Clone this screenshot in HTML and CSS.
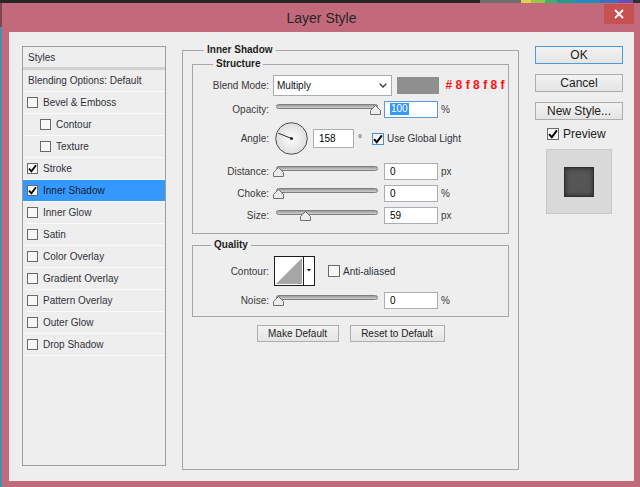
FILE: index.html
```html
<!DOCTYPE html>
<html lang="en">
<head>
<meta charset="utf-8">
<title>Layer Style</title>
<link rel="stylesheet" href="styles.css">
</head>
<body>
<div class="screen">
  <div class="taskstrip">
    <span class="seg dark"></span>
    <span class="seg icons"></span>
    <span class="seg c1"></span>
    <span class="seg c2"></span>
    <span class="seg c3"></span>
    <span class="seg c4"></span>
    <span class="seg c5"></span>
    <span class="seg c6"></span>
    <span class="seg c7"></span>
    <span class="seg c8"></span>
  </div>
  <div class="window">
    <div class="titlebar">
      <span class="title">Layer Style</span>
      <span class="close"><svg width="10" height="10" viewBox="0 0 10 10"><path d="M1 1 L9 9 M9 1 L1 9" stroke="#fff" stroke-width="1.8" fill="none"/></svg></span>
    </div>
    <div class="client">
      <aside class="style-list">
        <div class="list-head">Styles</div>
        <div class="list-item plain">Blending Options: Default</div>
        <div class="list-item"><span class="cb"></span>Bevel &amp; Emboss</div>
        <div class="list-item indent"><span class="cb"></span>Contour</div>
        <div class="list-item indent"><span class="cb"></span>Texture</div>
        <div class="list-item"><span class="cb"><svg class="tick" width="9" height="9" viewBox="0 0 9 9"><path d="M1 4.6 L3.4 7.4 L8 1.2" stroke="#000" stroke-width="1.8" fill="none"/></svg></span>Stroke</div>
        <div class="list-item selected"><span class="cb"><svg class="tick" width="9" height="9" viewBox="0 0 9 9"><path d="M1 4.6 L3.4 7.4 L8 1.2" stroke="#000" stroke-width="1.8" fill="none"/></svg></span>Inner Shadow</div>
        <div class="list-item"><span class="cb"></span>Inner Glow</div>
        <div class="list-item"><span class="cb"></span>Satin</div>
        <div class="list-item"><span class="cb"></span>Color Overlay</div>
        <div class="list-item"><span class="cb"></span>Gradient Overlay</div>
        <div class="list-item"><span class="cb"></span>Pattern Overlay</div>
        <div class="list-item"><span class="cb"></span>Outer Glow</div>
        <div class="list-item"><span class="cb"></span>Drop Shadow</div>
      </aside>

      <main class="settings">
        <fieldset class="group main-group">
          <legend>Inner Shadow</legend>

          <fieldset class="group structure">
            <legend>Structure</legend>
            <div class="row r-blend">
              <span class="lbl">Blend Mode:</span>
              <div class="select"><span>Multiply</span><svg class="chev" width="8" height="5" viewBox="0 0 8 5"><path d="M0.6 0.6 L4 4 L7.4 0.6" stroke="#333" stroke-width="1.3" fill="none"/></svg></div>
              <span class="swatch"></span>
              <span class="hex">#8f8f8f</span>
            </div>
            <div class="row r-opacity">
              <span class="lbl">Opacity:</span>
              <div class="slider"><span class="track"></span><svg class="thumb" style="left:97px" width="11" height="10" viewBox="0 0 11 10"><path d="M0.5 9.5 L0.5 5.5 L5.5 0.5 L10.5 5.5 L10.5 9.5 Z" fill="#ececec" stroke="#707070"/></svg></div>
              <span class="field focus"><span class="sel">100</span></span>
              <span class="unit">%</span>
            </div>
            <div class="row r-angle">
              <span class="lbl">Angle:</span>
              <svg class="dial" width="33" height="33" viewBox="0 0 33 33"><defs><radialGradient id="dg" cx="50%" cy="50%" r="50%"><stop offset="0" stop-color="#fdfdfd"/><stop offset="1" stop-color="#dedede"/></radialGradient></defs><circle cx="16.5" cy="16.5" r="15.8" fill="url(#dg)" stroke="#4d4d4d"/><line x1="16.5" y1="16.5" x2="3.4" y2="11.2" stroke="#2a2a2a" stroke-width="1"/><circle cx="16.5" cy="16.5" r="1.6" fill="#2a2a2a"/></svg>
              <span class="field angle">158</span>
              <span class="deg">°</span>
              <span class="cb lg focus"><svg class="tick" width="10" height="10" viewBox="0 0 9 9"><path d="M1 4.6 L3.4 7.4 L8 1.2" stroke="#000" stroke-width="1.8" fill="none"/></svg></span>
              <span class="cb-text">Use Global Light</span>
            </div>
            <div class="row r-distance">
              <span class="lbl">Distance:</span>
              <div class="slider"><span class="track"></span><svg class="thumb" style="left:0px" width="11" height="10" viewBox="0 0 11 10"><path d="M0.5 9.5 L0.5 5.5 L5.5 0.5 L10.5 5.5 L10.5 9.5 Z" fill="#ececec" stroke="#707070"/></svg></div>
              <span class="field">0</span>
              <span class="unit">px</span>
            </div>
            <div class="row">
              <span class="lbl">Choke:</span>
              <div class="slider"><span class="track"></span><svg class="thumb" style="left:0px" width="11" height="10" viewBox="0 0 11 10"><path d="M0.5 9.5 L0.5 5.5 L5.5 0.5 L10.5 5.5 L10.5 9.5 Z" fill="#ececec" stroke="#707070"/></svg></div>
              <span class="field">0</span>
              <span class="unit">%</span>
            </div>
            <div class="row">
              <span class="lbl">Size:</span>
              <div class="slider"><span class="track"></span><svg class="thumb" style="left:27px" width="11" height="10" viewBox="0 0 11 10"><path d="M0.5 9.5 L0.5 5.5 L5.5 0.5 L10.5 5.5 L10.5 9.5 Z" fill="#ececec" stroke="#707070"/></svg></div>
              <span class="field">59</span>
              <span class="unit">px</span>
            </div>
          </fieldset>

          <fieldset class="group quality">
            <legend>Quality</legend>
            <div class="row r-contour">
              <span class="lbl">Contour:</span>
              <svg class="contour" width="41" height="30" viewBox="0 0 41 30"><rect x="0.5" y="0.5" width="40" height="29" fill="#fff" stroke="#1c1c1c"/><polygon points="2,28 28,2 28,28" fill="#a6a6a6"/><line x1="29.5" y1="1" x2="29.5" y2="29" stroke="#1c1c1c"/><polygon points="33,13 37,13 35,15.5" fill="#111"/></svg>
              <span class="cb lg aa"></span>
              <span class="cb-text">Anti-aliased</span>
            </div>
            <div class="row r-noise">
              <span class="lbl">Noise:</span>
              <div class="slider"><span class="track"></span><svg class="thumb" style="left:0px" width="11" height="10" viewBox="0 0 11 10"><path d="M0.5 9.5 L0.5 5.5 L5.5 0.5 L10.5 5.5 L10.5 9.5 Z" fill="#ececec" stroke="#707070"/></svg></div>
              <span class="field">0</span>
              <span class="unit">%</span>
            </div>
          </fieldset>

          <div class="defaults">
            <button class="btn small make">Make Default</button>
            <button class="btn small reset">Reset to Default</button>
          </div>
        </fieldset>
      </main>

      <div class="actions">
        <button class="btn default">OK</button>
        <button class="btn">Cancel</button>
        <button class="btn">New Style...</button>
        <div class="preview-toggle"><span class="cb lg"><svg class="tick" width="10" height="10" viewBox="0 0 9 9"><path d="M1 4.6 L3.4 7.4 L8 1.2" stroke="#000" stroke-width="1.8" fill="none"/></svg></span><span>Preview</span></div>
        <div class="preview-box"><span class="preview-swatch"></span></div>
      </div>
    </div>
  </div>
</div>
</body>
</html>
```

FILE: styles.css
```css
* { box-sizing: border-box; }
html, body { margin: 0; padding: 0; }
body {
  width: 640px;
  height: 487px;
  overflow: hidden;
  font-family: "Liberation Sans", Arial, sans-serif;
  font-size: 10px;
  color: #333;
}

.screen {
  width: 640px;
  height: 487px;
  display: flex;
  flex-direction: column;
  background: linear-gradient(#7a4654 0 27px, #4b8fae 27px);
}

.taskstrip {
  height: 3px;
  display: flex;
  flex: none;
  background: #262626;
}
.seg { height: 3px; display: block; }
.seg.dark { flex: 1; }
.seg.icons { width: 41px; background: #6d6d6d; }
.seg.c1 { width: 10px; background: #e3cf4a; }
.seg.c2 { width: 14px; background: #9cc54b; }
.seg.c3 { width: 12px; background: #3db06b; }
.seg.c4 { width: 17px; background: #1f9b8f; }
.seg.c5 { width: 26px; background: #1d8fb8; }
.seg.c6 { width: 18px; background: #3b6fc0; }
.seg.c7 { width: 15px; background: #6a50b0; }
.seg.c8 { width: 7px; background: #303030; }

.window {
  flex: 1;
  margin-left: 2px;
  background: #c26a7b;
  display: flex;
  flex-direction: column;
  padding: 0 6px 6px 7px;
}

.titlebar {
  height: 29px;
  flex: none;
  display: grid;
  grid-template-columns: 1fr auto 1fr;
  align-items: center;
}
.title {
  grid-column: 2;
  font-size: 14px;
  color: #262626;
}
.close {
  grid-column: 3;
  justify-self: end;
  align-self: start;
  margin-top: 1px;
  width: 30px;
  height: 20px;
  background: #c75050;
  display: flex;
  align-items: center;
  justify-content: center;
}

.client {
  flex: 1;
  background: #eeeeee;
  display: flex;
  align-items: flex-start;
  padding: 14px 0 0 13px;
}

/* ---------- left list ---------- */
.style-list {
  flex: none;
  width: 144px;
  height: 420px;
  border: 1px solid #9d9d9d;
  color: #30323a;
}
.list-head {
  height: 23px;
  padding-left: 5px;
  display: flex;
  align-items: center;
  border-bottom: 3px solid #d1d1d1;
}
.list-item {
  height: 22px;
  display: flex;
  align-items: center;
  padding-left: 4px;
  border-bottom: 1px solid #fbfbfb;
  white-space: nowrap;
}
.list-item.plain { padding-left: 5px; }
.list-item.indent { padding-left: 17px; }
.list-item .cb { margin-right: 5px; }
.list-item.selected { background: #3399ff; color: #1a1a2a; }

.cb {
  flex: none;
  width: 11px;
  height: 11px;
  border: 1px solid #6a6a6a;
  background: #f7f7f7;
  display: inline-flex;
  align-items: center;
  justify-content: center;
}
.cb.lg { width: 12px; height: 12px; }
.cb.focus { border-color: #4a90d9; }

/* ---------- settings ---------- */
.settings {
  flex: none;
  margin: -2px 0 0 16px;
}
fieldset.group {
  margin: 0;
  border: 1px solid #a6a6a6;
  min-width: 0;
}
fieldset.group > legend {
  font-weight: bold;
  padding: 0 3px;
  line-height: 12px;
  color: #1e1e1e;
}
.main-group {
  width: 337px;
  height: 426px;
  padding: 2px 9px 0 9px;
}
.main-group > legend { margin-left: 12px; }
.structure { padding: 4px 0 7px 0; }
.structure > legend { margin-left: 20px; }
.quality { margin-top: 5px !important; padding: 5px 0 5px 0; }
.quality > legend { margin-left: 18px; }

.row {
  display: flex;
  align-items: center;
  height: 22px;
  white-space: nowrap;
}
.lbl {
  flex: none;
  width: 76px;
  margin-right: 4px;
  text-align: right;
  color: #3a3a3a;
}
.r-opacity { margin-top: 2px; }
.r-angle { height: 33px; margin-top: 2px; }
.r-distance { margin-top: 5px; }
.r-contour { height: 30px; }
.r-noise { margin-top: 3px; }

.select {
  width: 119px;
  height: 21px;
  border: 1px solid #acacac;
  background: #fff;
  display: flex;
  align-items: center;
  padding: 0 4px 0 3px;
  color: #111;
}
.chev { margin-left: auto; }
.swatch {
  width: 42px;
  height: 17px;
  margin-left: 5px;
  background: #8f8f8f;
}
.hex {
  margin-left: 7px;
  font-size: 12px;
  font-weight: bold;
  letter-spacing: 3.4px;
  color: #ff1010;
}

.slider {
  position: relative;
  width: 106px;
  height: 22px;
  flex: none;
}
.track {
  position: absolute;
  left: 3px;
  right: 1px;
  top: 6px;
  height: 5px;
  border: 1px solid #7f7f7f;
  border-radius: 3px;
  background: linear-gradient(#9b9b9b, #d0d0d0);
}
.thumb {
  position: absolute;
  top: 7px;
}

.field {
  flex: none;
  width: 54px;
  height: 17px;
  margin-left: 5px;
  border: 1px solid #abadb3;
  background: #fff;
  display: flex;
  align-items: center;
  padding-left: 5px;
  color: #000;
}
.field.focus { border-color: #5a9ae0; }
.sel {
  background: #3399ff;
  color: #fff;
  line-height: 12px;
  padding: 0 1px;
}
.field.angle { width: 41px; height: 19px; }
.unit { margin-left: 3px; color: #3a3a3a; }

.dial { flex: none; margin-left: 2px; }
.deg { margin-left: 4px; color: #3a3a3a; }
.r-angle .cb { margin-left: 10px; }
.cb-text { margin-left: 3px; color: #30323a; }

.contour { flex: none; margin-left: 1px; }
.cb.aa { margin-left: 13px; }

.defaults {
  display: flex;
  justify-content: center;
  gap: 11px;
  margin-top: 8px;
}

/* ---------- buttons ---------- */
.btn {
  display: block;
  width: 88px;
  height: 18px;
  padding: 0;
  border: 1px solid #adadad;
  border-radius: 0;
  background: linear-gradient(#f3f3f3, #e4e4e4);
  font-family: "Liberation Sans", Arial, sans-serif;
  font-size: 12px;
  color: #222;
  line-height: 16px;
}
.btn.default { border-color: #4f9ad8; }
.btn.small { height: 17px; font-size: 10px; line-height: 15px; }
.btn.make { width: 82px; }
.btn.reset { width: 95px; }

.actions {
  flex: none;
  width: 88px;
  margin-left: 16px;
  display: flex;
  flex-direction: column;
  gap: 10px;
}
.preview-toggle {
  display: flex;
  align-items: center;
  gap: 4px;
  margin: -3px 0 0 12px;
  height: 14px;
  font-size: 12px;
  color: #222;
}
.preview-box {
  width: 66px;
  height: 65px;
  margin: -2px 0 0 11px;
  background: #d9d9d9;
  border: 1px solid #c8c8c8;
  display: flex;
  align-items: center;
  justify-content: center;
}
.preview-swatch {
  width: 30px;
  height: 30px;
  background: #565656;
  border: 1px solid #2e2e2e;
  box-shadow: inset 0 0 5px #242424;
}
```
